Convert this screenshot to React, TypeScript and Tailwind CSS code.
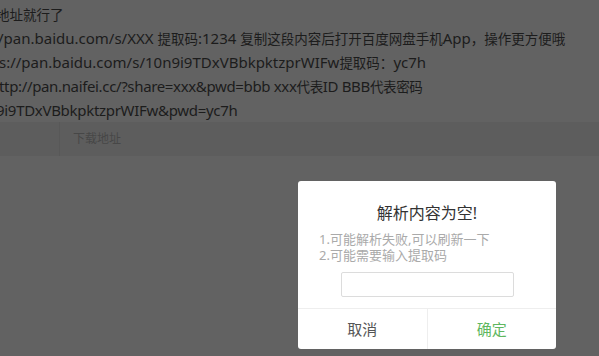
import React from 'react';

const lines = [
  '地址就行了',
  '/pan.baidu.com/s/XXX 提取码:1234 复制这段内容后打开百度网盘手机App，操作更方便哦',
  's://pan.baidu.com/s/10n9i9TDxVBbkpktzprWIFw提取码：yc7h',
  'ttp://pan.naifei.cc/?share=xxx&pwd=bbb xxx代表ID BBB代表密码',
  '9i9TDxVBbkpktzprWIFw&pwd=yc7h',
];

// each line is scrolled a little past the left edge in the shot
const lineClass = [
  'ml-[-4px]',
  'ml-[-2px]',
  'ml-[-1px]',
  'ml-[-1px] tracking-[-0.35px]',
  'ml-[-4px] tracking-[-0.3px]',
];

// CJK glyphs in the shot are a touch smaller than the latin ones
const renderLine = (t: string) =>
  t.split(/([\u3000-\u9fff\uff00-\uffef]+)/).map((part, i) =>
    /[\u3000-\u9fff\uff00-\uffef]/.test(part) ? (
      <span key={i} className="text-[13.5px]">
        {part}
      </span>
    ) : (
      <span key={i}>{part}</span>
    )
  );

const App: React.FC = () => {
  return (
    <div
      className="relative w-[599px] h-[356px] overflow-hidden bg-[#626262]"
      style={{ fontFamily: '"Noto Sans", "Noto Sans CJK SC", sans-serif' }}
    >
      {/* page content under the mask */}
      <div className="pt-[3px] text-[15px] leading-[23px] text-[#1c1c1c] whitespace-nowrap">
        {lines.map((t, i) => (
          <div key={i} className={lineClass[i]}>
            {renderLine(t)}
          </div>
        ))}
      </div>
      <div className="h-[34px] flex bg-[#5d5d5d]">
        <div className="w-[60px] border-r border-[#585858]" />
        <div className="pl-[13px] flex items-center text-[12px] text-[#474747]">下载地址</div>
      </div>

      {/* dialog */}
      <div className="absolute left-[298px] top-[181px] w-[258px] h-[168px] bg-white rounded-[3px] flex flex-col">
        <div className="pt-[21px] text-center text-[16px] leading-[22px] text-[#333]">解析内容为空!</div>
        <div className="mt-[7px] pl-[21px] text-[13px] leading-[16px] text-[#aaaaaa]">
          <div>1.可能解析失败,可以刷新一下</div>
          <div>2.可能需要输入提取码</div>
        </div>
        <div className="mt-[9px] flex justify-center">
          <input className="w-[173px] h-[25px] border border-[#dcdcdc] rounded-[2px] outline-none" />
        </div>
        <div className="mt-auto h-[41px] flex border-t border-[#eeeeee] text-[15px]">
          <div className="flex-1 flex items-center justify-center text-[#555]">取消</div>
          <div className="flex-1 flex items-center justify-center text-[#5fb760] border-l border-[#eeeeee]">确定</div>
        </div>
      </div>
    </div>
  );
};

export default App;
